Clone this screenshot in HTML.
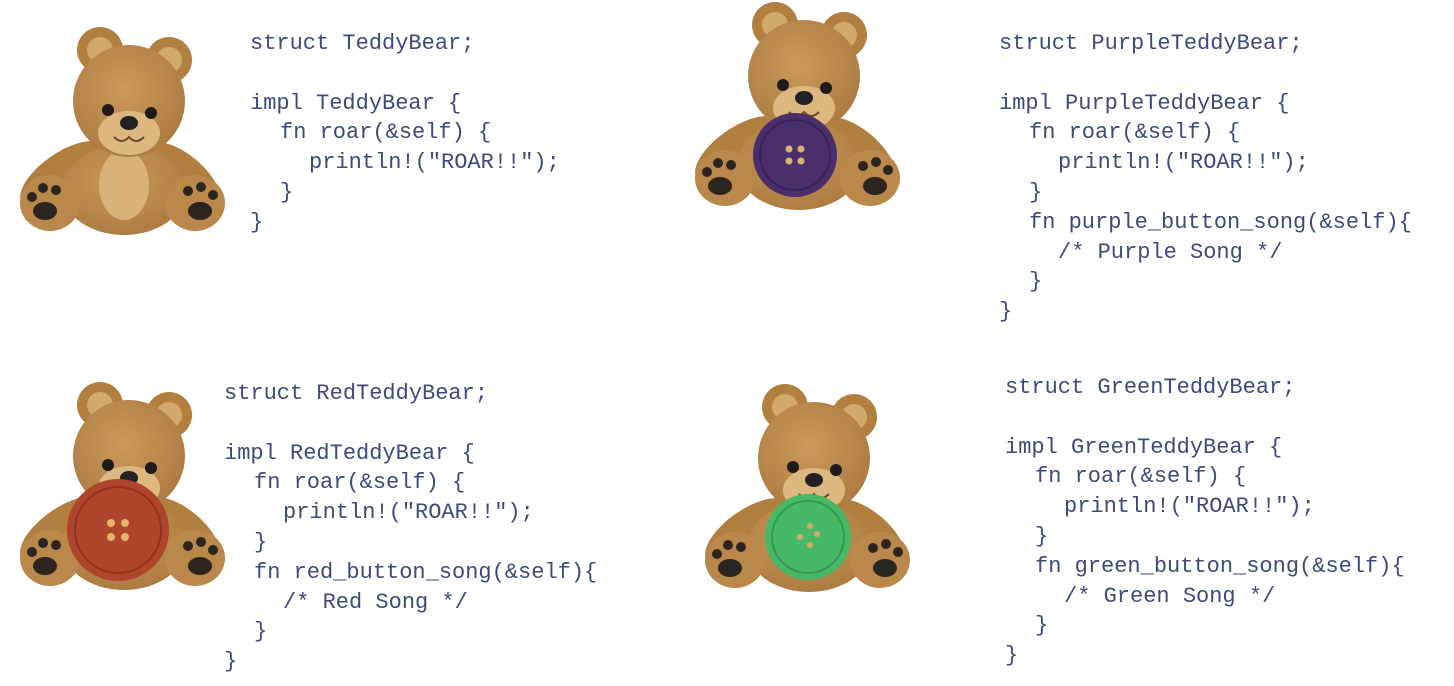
<!DOCTYPE html>
<html><head><meta charset="utf-8"><style>
html,body{margin:0;padding:0;background:#fff;width:1454px;height:686px;overflow:hidden;position:relative}
.c{position:absolute;margin:0;font-family:"Liberation Mono",monospace;font-size:22px;line-height:29.8px;color:#3d4a7a}
.c div{height:29.8px;white-space:pre}
.i1{padding-left:30px}.i2{padding-left:59px}
svg.b{position:absolute}
</style></head><body>
<svg width="0" height="0" style="position:absolute">
<defs>
<radialGradient id="fur" cx="0.45" cy="0.4" r="0.7"><stop offset="0" stop-color="#c99a5a"/><stop offset="1" stop-color="#a8773e"/></radialGradient>
<g id="bear">
<circle cx="82" cy="25" r="23" fill="#b1803f"/><circle cx="82" cy="25" r="13" fill="#d2a96c"/>
<circle cx="151" cy="35" r="23" fill="#b1803f"/><circle cx="151" cy="35" r="13" fill="#d2a96c"/>
<ellipse cx="45" cy="150" rx="22" ry="50" transform="rotate(55 45 150)" fill="#b17f40"/>
<ellipse cx="165" cy="150" rx="20" ry="45" transform="rotate(-50 165 150)" fill="#b17f40"/>
<ellipse cx="106" cy="165" rx="62" ry="45" fill="url(#fur)"/>
<ellipse cx="106" cy="160" rx="25" ry="35" fill="#d8b27a"/>
<ellipse cx="32" cy="178" rx="30" ry="28" fill="#b9884a"/>
<ellipse cx="177" cy="178" rx="30" ry="28" fill="#b9884a"/>
<ellipse cx="27" cy="186" rx="12" ry="9" fill="#2d2520"/><circle cx="14" cy="172" r="5" fill="#2d2520"/><circle cx="25" cy="163" r="5" fill="#2d2520"/><circle cx="38" cy="165" r="5" fill="#2d2520"/>
<ellipse cx="182" cy="186" rx="12" ry="9" fill="#2d2520"/><circle cx="170" cy="166" r="5" fill="#2d2520"/><circle cx="183" cy="162" r="5" fill="#2d2520"/><circle cx="195" cy="170" r="5" fill="#2d2520"/>
<circle cx="111" cy="76" r="56" fill="url(#fur)"/>
<ellipse cx="111" cy="108" rx="31" ry="22" fill="#dcb77f"/>
<circle cx="90" cy="85" r="6" fill="#1e1a18"/><circle cx="133" cy="88" r="6" fill="#1e1a18"/>
<ellipse cx="111" cy="98" rx="9" ry="7" fill="#222"/>
<path d="M96 112 Q104 120 111 112 Q118 120 126 112" stroke="#6b4a25" stroke-width="2" fill="none"/>
</g>
</defs></svg>

<svg class="b" style="left:18px;top:25px" width="210" height="210" viewBox="0 0 210 210"><use href="#bear"/></svg>

<svg class="b" style="left:693px;top:0px" width="210" height="210" viewBox="0 0 210 210"><use href="#bear"/>
<circle cx="102" cy="155" r="42" fill="#4b2f6d"/><circle cx="102" cy="155" r="35" fill="none" stroke="#3a2357" stroke-width="2"/>
<circle cx="96" cy="149" r="3.5" fill="#d7b56a"/><circle cx="108" cy="149" r="3.5" fill="#d7b56a"/><circle cx="96" cy="161" r="3.5" fill="#d7b56a"/><circle cx="108" cy="161" r="3.5" fill="#d7b56a"/></svg>

<svg class="b" style="left:18px;top:380px" width="210" height="210" viewBox="0 0 210 210"><use href="#bear"/>
<circle cx="100" cy="150" r="51" fill="#b0452e"/><circle cx="100" cy="150" r="43" fill="none" stroke="#93321f" stroke-width="2"/>
<circle cx="93" cy="143" r="4" fill="#e0b46a"/><circle cx="107" cy="143" r="4" fill="#e0b46a"/><circle cx="93" cy="157" r="4" fill="#e0b46a"/><circle cx="107" cy="157" r="4" fill="#e0b46a"/></svg>

<svg class="b" style="left:703px;top:382px" width="210" height="210" viewBox="0 0 210 210"><use href="#bear"/>
<circle cx="105" cy="155" r="43" fill="#46b866"/><circle cx="105" cy="155" r="36" fill="none" stroke="#34994f" stroke-width="2"/>
<circle cx="107" cy="144" r="3" fill="#d6a866"/><circle cx="97" cy="155" r="3" fill="#d6a866"/><circle cx="114" cy="152" r="3" fill="#d6a866"/><circle cx="107" cy="163" r="3" fill="#d6a866"/></svg>

<div class="c" style="left:250px;top:29px"><div>struct TeddyBear;</div><div></div><div>impl TeddyBear {</div><div class="i1">fn roar(&amp;self) {</div><div class="i2">println!("ROAR!!");</div><div class="i1">}</div><div>}</div></div>

<div class="c" style="left:999px;top:29px"><div>struct PurpleTeddyBear;</div><div></div><div>impl PurpleTeddyBear {</div><div class="i1">fn roar(&amp;self) {</div><div class="i2">println!("ROAR!!");</div><div class="i1">}</div><div class="i1">fn purple_button_song(&amp;self){</div><div class="i2">/* Purple Song */</div><div class="i1">}</div><div>}</div></div>

<div class="c" style="left:224px;top:379px"><div>struct RedTeddyBear;</div><div></div><div>impl RedTeddyBear {</div><div class="i1">fn roar(&amp;self) {</div><div class="i2">println!("ROAR!!");</div><div class="i1">}</div><div class="i1">fn red_button_song(&amp;self){</div><div class="i2">/* Red Song */</div><div class="i1">}</div><div>}</div></div>

<div class="c" style="left:1005px;top:373px"><div>struct GreenTeddyBear;</div><div></div><div>impl GreenTeddyBear {</div><div class="i1">fn roar(&amp;self) {</div><div class="i2">println!("ROAR!!");</div><div class="i1">}</div><div class="i1">fn green_button_song(&amp;self){</div><div class="i2">/* Green Song */</div><div class="i1">}</div><div>}</div></div>
</body></html>
